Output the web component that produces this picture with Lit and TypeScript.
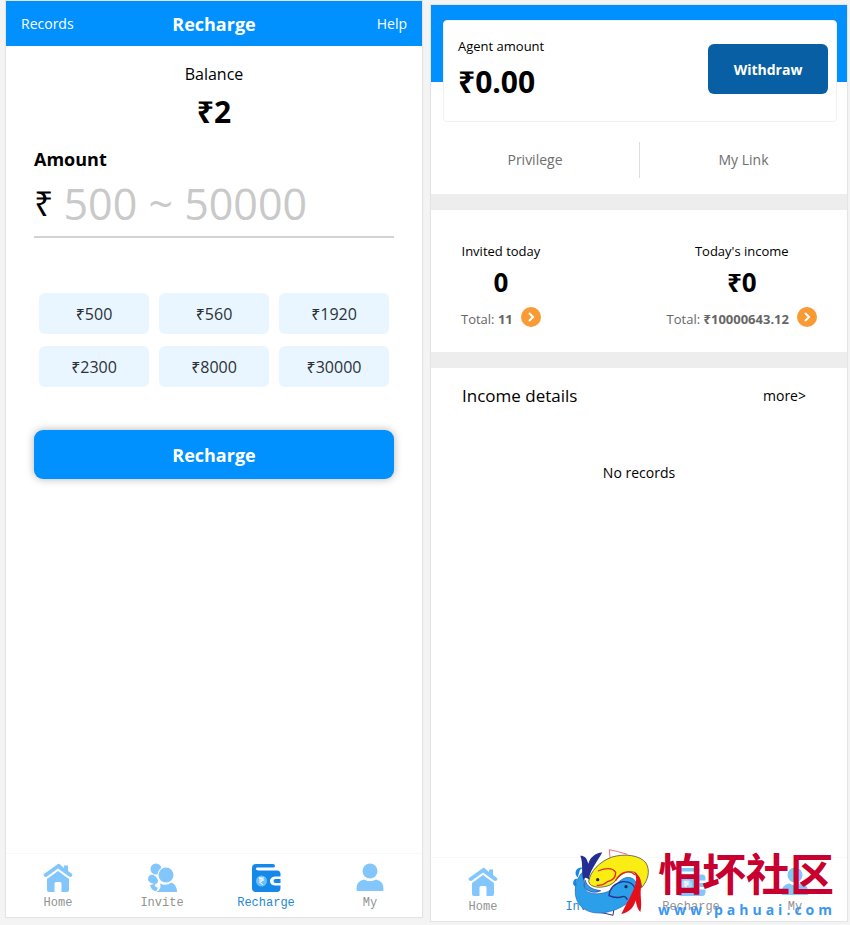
import { LitElement, html, svg, css } from "lit";
import { customElement, property } from "lit/decorators.js";
import { classMap } from "lit/directives/class-map.js";

const house = svg`
  <path d="M15 1 L1 11 Q0 12 1 13 Q2 14.500 4 13.500 L15 5.500 L26 13.500 Q28 14.500 29 13 Q30 12 29 11 L25 8 V2.500 H21 V5 L17 1.500 Q16 .5 15 1Z"/>
  <path d="M15 8 L4 16 V27 Q4 29 6 29 H11.500 V20.500 Q11.500 19 13 19 H17 Q18.500 19 18.500 20.500 V29 H24 Q26 29 26 27 V16Z"/>`;

const people = svg`
  <circle cx="9" cy="6" r="5.500"/>
  <path d="M1 17 Q1 11 6.500 12 Q9 13 10.500 16 Q12 19 9 21 Q3 21 1 17Z"/>
  <path d="M3 22 L9 20.500 L7.500 23 L11 25 L9 28.500 Q4 27 3 22Z"/>
  <circle class="gap" cx="19" cy="12" r="8.500"/>
  <circle cx="19" cy="12" r="7.500"/>
  <path d="M9.500 29 Q15 26 13 20.500 Q19 23.500 24.500 19.500 Q30 22 30 29Z"/>`;

const wallet = svg`
  <path d="M5 1 H22 Q24 1 24 3 Q24 4.500 22 4.500 H6 Q4.500 5 5 6.500 L7 7.500 H26 Q29.500 7.500 29.500 11 V13.500 H24 Q19 14 19 18 Q19 22 24 22.500 H29.500 V25 Q29.500 29 26 29 H5 Q1 29 1 25 V5 Q1 1 5 1Z"/>
  <path d="M24.500 16 H29.500 V20 H24.500 Q22.500 20 22.500 18 Q22.500 16 24.500 16Z"/>
  <circle class="coin" cx="10.500" cy="18" r="5.500"/>
  <path class="mark" d="M8 15 H13 M8 17 H13 M8 15 Q12 15 11.500 17 Q11 19 8.500 19 L12 22"/>`;

const person = svg`
  <circle cx="15" cy="8" r="7.500"/>
  <path d="M1.500 27 Q1 18 9 16.500 Q15 20 21 16.500 Q29 18 28.500 27 Q28.500 28 27.500 28 H2.500 Q1.500 28 1.500 27Z"/>`;

const tabs = [
  { label: "Home", icon: house },
  { label: "Invite", icon: people },
  { label: "Recharge", icon: wallet },
  { label: "My", icon: person },
];

const arrow = html`<svg class="arrow" viewBox="0 0 20 20" aria-hidden="true">
  <path d="M8 6 L12 10 L8 14" />
</svg>`;

@customElement("tab-bar")
class TabBar extends LitElement {
  @property() active = "";

  static styles = css`
    :host {
      display: block;
      border-top: 1px solid #f9f9fb;
    }
    .bar {
      display: grid;
      grid-template-columns: repeat(4, 1fr);
      padding: 9px 0 6px;
    }
    .tab {
      display: flex;
      flex-direction: column;
      align-items: center;
      gap: 2px;
      color: #939393;
      text-decoration: none;
      font: 12px/16px "Liberation Mono", monospace;
    }
    .icon {
      width: 30px;
      height: 30px;
      fill: #82c6fb;
    }
    .gap {
      fill: #fff;
    }
    .coin {
      fill: #a9d8fc;
    }
    .mark {
      fill: none;
      stroke: #fff;
    }
    .on {
      color: #2488d4;
    }
    .on .icon {
      fill: #1688e9;
    }
    .on .coin {
      fill: #6dc0fa;
    }
  `;

  render() {
    return html`<nav class="bar">
      ${tabs.map(
        (t) => html`<a href="#${t.label.toLowerCase()}" class=${classMap({ tab: true, on: t.label === this.active })}>
          <svg class="icon" viewBox="0 0 30 30" aria-hidden="true">${t.icon}</svg>
          ${t.label}
        </a>`
      )}
    </nav>`;
  }
}

@customElement("site-mark")
class SiteMark extends LitElement {
  static styles = css`
    :host {
      display: flex;
      align-items: flex-start;
      gap: 4px;
    }
    .fish {
      width: 84px;
      height: 78px;
      flex: none;
    }
    .words {
      padding-top: 5px;
    }
    .name {
      margin-bottom: 4px;
      font: bold 44px/48px "Noto Sans CJK SC", sans-serif;
      color: #c8002f;
      white-space: nowrap;
    }
    .site {
      font: bold 14px/20px "Open Sans", "Noto Sans", sans-serif;
      letter-spacing: 4px;
      color: #3b97f3;
    }
  `;

  render() {
    return html`
      <svg class="fish" viewBox="0 0 252 234" aria-hidden="true">
        <path fill="#fff" d="M30 80 L60 60 L118 20 L225 50 L240 100 L210 160 L158 214 L128 218 L50 208 L18 170 L18 120Z" />
        <path fill="#fff" stroke="#e22b38" stroke-width="2" d="M120 44 L118 20 Q140 24 172 34" />
        <path fill="#fff" stroke="#28349a" stroke-width="3" d="M88 208 Q108 211 129 217 L132 194" />
        <path fill="#2b9fea" stroke="#2c62b5" stroke-width="2"
          d="M44 82 C22 98 12 130 17 160 C24 192 52 212 92 210 C140 206 190 180 201 138 C203 116 192 104 174 103 C156 104 142 120 128 136 C112 152 76 158 52 146 C38 136 38 100 44 82Z" />
        <path fill="#2b9fea" stroke="#26338f" stroke-width="2" d="M46 112 C50 130 66 140 92 143 Q72 154 50 140 Q38 128 46 112Z" />
        <path fill="#f9ed13" stroke="#303030" stroke-width="2"
          d="M56 116 C60 86 88 56 126 42 C164 31 210 36 228 60 C242 84 234 112 215 134 C212 100 198 84 178 86 C148 88 144 114 120 126 C98 136 60 136 56 116Z" />
        <path fill="none" stroke="#e22b20" stroke-width="4"
          d="M84 84 Q124 68 137 88 Q138 110 112 116 Q98 128 80 127 M136 114 C150 88 176 78 196 96" />
        <path fill="none" stroke="#26338f" stroke-width="4" d="M196 138 Q188 114 158 116 Q120 124 117 158 Q140 168 160 160 Q168 160 172 170" />
        <circle cx="83" cy="110" r="5" fill="#222b4c" />
        <circle cx="168" cy="131" r="5" fill="#222b4c" />
        <path fill="#222e91"
          d="M58 110 C56 88 78 62 97 28 C76 30 60 44 55 62 C50 44 44 38 31 38 C42 66 30 92 44 118 Q40 96 58 110Z" />
        <path fill="#e3101c"
          d="M190 84 C212 112 188 146 154 213 C180 208 192 192 197 172 C200 190 204 200 211 207 C218 178 208 156 214 128 Q212 96 190 84Z" />
      </svg>
      <div class="words">
        <div class="name">怕坏社区</div>
        <div class="site">www.pahuai.com</div>
      </div>
    `;
  }
}

@customElement("app-root")
class AppRoot extends LitElement {
  static styles = css`
    :host {
      display: block;
      font-family: "Open Sans", "Noto Sans", sans-serif;
      color: #000;
    }
    * {
      box-sizing: border-box;
    }
    .page {
      display: grid;
      grid-template-columns: repeat(2, minmax(0, 1fr));
      gap: 9px;
      min-height: 100vh;
      padding: 0 3px 0 6px;
      background: #f4f4f5;
    }
    .phone {
      display: flex;
      flex-direction: column;
      background: #fff;
      box-shadow: 0 0 1px 1px #e4e4e6;
    }
    .wallet {
      margin: 1px 0 8px;
    }
    .agent {
      position: relative;
      margin: 5px 0 4px;
    }
    .tabs {
      margin-top: auto;
    }
    button {
      border: 0;
      font-family: inherit;
      cursor: pointer;
    }
    a {
      text-decoration: none;
      color: inherit;
    }
    h1,
    h2 {
      margin: 0;
    }

    .head {
      display: grid;
      grid-template-columns: 1fr auto 1fr;
      align-items: center;
      height: 45px;
      padding: 0 15px;
      background: #0091ff;
      color: #fff;
      font-size: 14px;
    }
    .title {
      font-size: 18px;
      line-height: 28px;
    }
    .help {
      text-align: right;
    }
    .form {
      display: flex;
      flex-direction: column;
      padding: 16px 28px 0;
    }
    .balance {
      text-align: center;
      font-size: 16px;
      line-height: 24px;
    }
    .sum {
      margin-top: 6px;
      text-align: center;
      font-size: 30px;
      line-height: 40px;
      font-weight: bold;
    }
    .caption {
      margin-top: 12px;
      font-size: 18px;
      line-height: 30px;
      font-weight: bold;
    }
    .entry {
      display: flex;
      align-items: center;
      gap: 10px;
      height: 64px;
      padding-bottom: 4px;
      border-bottom: 2px solid #d2d2d2;
      font-size: 34px;
    }
    .field {
      flex: 1;
      min-width: 0;
      height: 56px;
      padding: 0;
      border: 0;
      outline: 0;
      background: none;
      font-family: inherit;
      font-size: 43px;
    }
    .field::placeholder {
      color: #c9c9c9;
      opacity: 1;
    }
    .presets {
      display: grid;
      grid-template-columns: repeat(3, 1fr);
      gap: 12px 10px;
      margin: 55px 5px 43px;
    }
    .preset {
      height: 41px;
      border-radius: 6px;
      background: #eaf6ff;
      color: #2b3238;
      font-size: 16px;
    }
    .submit {
      height: 49px;
      border-radius: 9px;
      background: #0091ff;
      box-shadow: 0 0 8px rgba(0, 0, 0, 0.3);
      color: #fff;
      font-size: 18px;
      font-weight: bold;
    }

    .hero {
      padding: 15px 10px 0 12px;
      background: linear-gradient(#0091ff, #0091ff) top / 100% 77px no-repeat;
    }
    .card {
      display: flex;
      align-items: center;
      justify-content: space-between;
      height: 102px;
      padding: 14px 8px 18px 14px;
      border: 1px solid #f0f0f0;
      border-radius: 4px;
      background: #fff;
    }
    .small {
      font-size: 13px;
      line-height: 20px;
    }
    .agent-sum {
      margin-top: 6px;
      font-size: 30px;
      line-height: 40px;
      font-weight: bold;
    }
    .withdraw {
      width: 120px;
      height: 50px;
      border-radius: 6px;
      background: #085fa3;
      color: #fff;
      font-size: 14px;
      font-weight: bold;
    }
    .links {
      display: grid;
      grid-template-columns: 1fr 1fr;
      padding: 20px 0 16px;
      color: #6e6e6e;
      font-size: 14px;
      line-height: 36px;
      text-align: center;
    }
    .link + .link {
      border-left: 1px solid #dcdcdc;
    }
    .band {
      height: 16px;
      background: #ededed;
    }
    .stats {
      display: flex;
      justify-content: space-between;
      height: 142px;
      padding: 31px 30px 0;
      text-align: center;
    }
    .value {
      margin: 3px 0 7px;
      font-size: 26px;
      line-height: 36px;
      font-weight: bold;
    }
    .total {
      display: flex;
      align-items: flex-end;
      justify-content: center;
      gap: 8px;
      color: #666;
      font-size: 13px;
      line-height: 16px;
    }
    .go {
      width: 20px;
      height: 20px;
      padding: 0;
      border-radius: 50%;
      background: #f99a35;
    }
    .arrow {
      display: block;
      width: 20px;
      height: 20px;
      fill: none;
      stroke: #fff;
      stroke-width: 2;
    }
    .details {
      display: flex;
      justify-content: space-between;
      padding: 16px 41px 0 31px;
      line-height: 24px;
    }
    .details-title {
      font-size: 17px;
      font-weight: normal;
    }
    .more,
    .none {
      font-size: 14px;
    }
    .none {
      margin: 53px 0 0;
      line-height: 24px;
      text-align: center;
    }
    .stamp {
      position: absolute;
      right: 11px;
      bottom: 0;
      pointer-events: none;
    }
  `;

  render() {
    return html`<main class="page">
      <section class="phone wallet">
        <header class="head">
          <a href="#records">Records</a>
          <h1 class="title">Recharge</h1>
          <a class="help" href="#help">Help</a>
        </header>
        <div class="form">
          <div class="balance">Balance</div>
          <div class="sum">₹2</div>
          <label class="caption" for="amount">Amount</label>
          <div class="entry">
            <span>₹</span>
            <input class="field" id="amount" inputmode="numeric" placeholder="500 ~ 50000" />
          </div>
          <div class="presets">
            ${[500, 560, 1920, 2300, 8000, 30000].map((n) => html`<button class="preset">₹${n}</button>`)}
          </div>
          <button class="submit">Recharge</button>
        </div>
        <tab-bar class="tabs" active="Recharge"></tab-bar>
      </section>

      <section class="phone agent">
        <div class="hero">
          <div class="card">
            <div>
              <div class="small">Agent amount</div>
              <div class="agent-sum">₹0.00</div>
            </div>
            <button class="withdraw">Withdraw</button>
          </div>
        </div>
        <div class="links">
          <a class="link" href="#privilege">Privilege</a>
          <a class="link" href="#link">My Link</a>
        </div>
        <div class="band"></div>
        <div class="stats">
          <div>
            <div class="small">Invited today</div>
            <div class="value">0</div>
            <div class="total">
              <span>Total: <b>11</b></span>
              <button class="go" aria-label="Invited list">${arrow}</button>
            </div>
          </div>
          <div>
            <div class="small">Today's income</div>
            <div class="value">₹0</div>
            <div class="total">
              <span>Total: <b>₹10000643.12</b></span>
              <button class="go" aria-label="Income list">${arrow}</button>
            </div>
          </div>
        </div>
        <div class="band"></div>
        <div class="details">
          <h2 class="details-title">Income details</h2>
          <a class="more" href="#more">more&gt;</a>
        </div>
        <p class="none">No records</p>
        <tab-bar class="tabs" active="Invite"></tab-bar>
        <site-mark class="stamp"></site-mark>
      </section>
    </main>`;
  }
}
